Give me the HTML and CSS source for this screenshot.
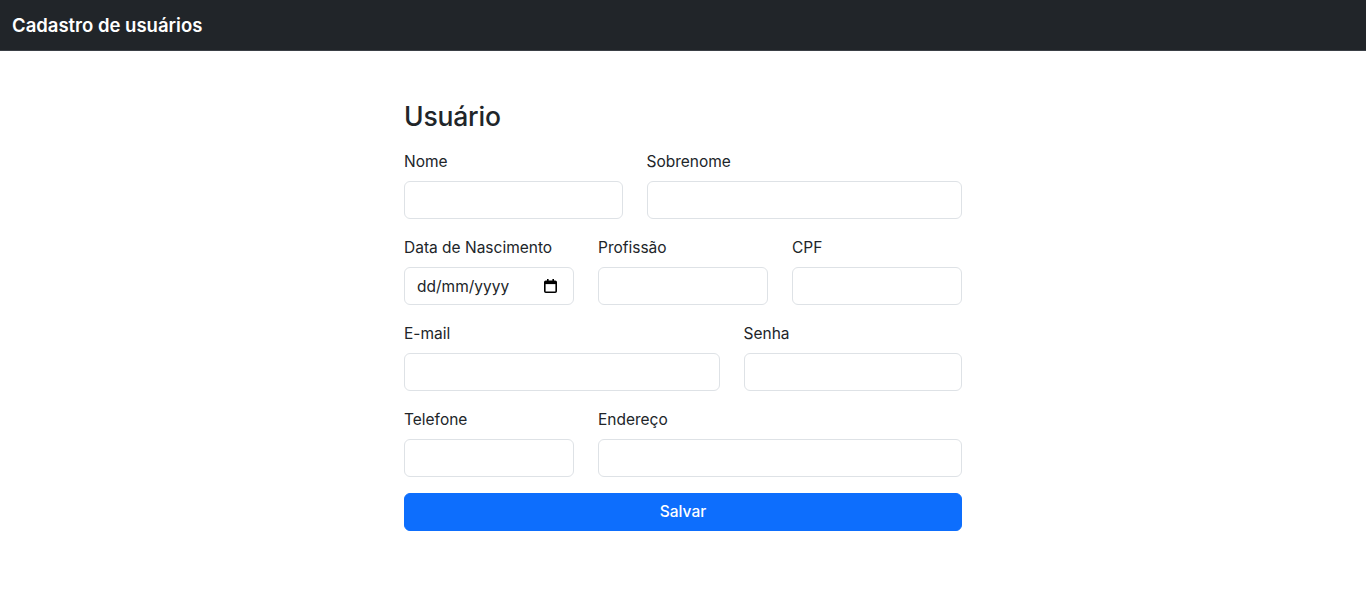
FILE: index.html
```html
<!DOCTYPE html>
<html lang="pt-BR">
<head>
<meta charset="utf-8">
<title>Cadastro de usuários</title>
<link rel="stylesheet" href="styles.css">
</head>
<body>
<nav class="navbar">
  <span class="brand">Cadastro de usuários</span>
</nav>
<main class="page">
  <form class="user-form">
    <h3 class="title">Usuário</h3>
    <div class="row">
      <div class="field col-5">
        <label class="label" for="nome">Nome</label>
        <input class="input" id="nome" type="text">
      </div>
      <div class="field col-7">
        <label class="label" for="sobrenome">Sobrenome</label>
        <input class="input" id="sobrenome" type="text">
      </div>
    </div>
    <div class="row">
      <div class="field col-4">
        <label class="label" for="nasc">Data de Nascimento</label>
        <div class="input date-input" id="nasc">
          <span class="date-text">dd/mm/yyyy</span>
          <svg class="cal-icon" width="13" height="14" viewBox="0 0 13 14" aria-hidden="true">
            <rect x="3" y="0" width="1.6" height="2.5" fill="#000"/>
            <rect x="8.4" y="0" width="1.6" height="2.5" fill="#000"/>
            <rect x="0.8" y="2.3" width="11.4" height="10.9" rx="1" fill="none" stroke="#000" stroke-width="1.6"/>
            <rect x="0.8" y="2.3" width="11.4" height="2.8" fill="#000"/>
          </svg>
        </div>
      </div>
      <div class="field col-4">
        <label class="label" for="prof">Profissão</label>
        <input class="input" id="prof" type="text">
      </div>
      <div class="field col-4">
        <label class="label" for="cpf">CPF</label>
        <input class="input" id="cpf" type="text">
      </div>
    </div>
    <div class="row">
      <div class="field col-7">
        <label class="label" for="email">E-mail</label>
        <input class="input" id="email" type="email">
      </div>
      <div class="field col-5">
        <label class="label" for="senha">Senha</label>
        <input class="input" id="senha" type="password">
      </div>
    </div>
    <div class="row">
      <div class="field col-4">
        <label class="label" for="tel">Telefone</label>
        <input class="input" id="tel" type="text">
      </div>
      <div class="field col-8">
        <label class="label" for="end">Endereço</label>
        <input class="input" id="end" type="text">
      </div>
    </div>
    <button class="btn-primary" type="button">Salvar</button>
  </form>
</main>
</body>
</html>
```

FILE: styles.css
```css
* { box-sizing: border-box; }

html, body {
  margin: 0;
  padding: 0;
  background: #fff;
}

body {
  font-family: Inter, "Noto Sans", "Liberation Sans", Arial, sans-serif;
  font-size: 16px;
  line-height: 24px;
  color: #212529;
}

.navbar {
  height: 51px;
  background: #212529;
  border-bottom: 1px solid #3a3f45;
  display: flex;
  align-items: center;
  padding: 0 12px;
}

.brand {
  color: #fff;
  font-size: 18.5px;
  font-weight: 600;
  letter-spacing: 0;
  line-height: 30px;
}

.page {
  display: flex;
  justify-content: center;
  padding-top: 48px;
}

.user-form {
  width: 558px;
  display: flex;
  flex-direction: column;
}

.title {
  margin: 0 0 16px;
  padding-top: 1px;
  font-size: 26.5px;
  font-weight: 500;
  line-height: 33px;
  letter-spacing: -0.2px;
}

.row {
  display: grid;
  grid-template-columns: repeat(12, 1fr);
  column-gap: 24px;
  margin-bottom: 16px;
}

.col-4 { grid-column: span 4; }
.col-5 { grid-column: span 5; }
.col-7 { grid-column: span 7; }
.col-8 { grid-column: span 8; }

.field {
  display: flex;
  flex-direction: column;
  min-width: 0;
}

.label {
  display: block;
  padding-top: 1px;
  margin-bottom: 7px;
  font-size: 15.5px;
  line-height: 24px;
}

.input {
  display: block;
  width: 100%;
  height: 38px;
  padding: 6px 12px;
  font: inherit;
  color: #212529;
  background: #fff;
  border: 1px solid #dee2e6;
  border-radius: 6px;
  outline: none;
}

.date-input {
  display: flex;
  align-items: center;
  justify-content: space-between;
  padding: 0 16px 0 12px;
}

.date-text {
  font-size: 15.5px;
  color: #212529;
  padding-top: 1px;
}

.cal-icon {
  flex: none;
  margin-top: -1px;
}

.btn-primary {
  display: block;
  width: 100%;
  height: 38px;
  padding-top: 1px;
  background: #0d6efd;
  color: #fff;
  border: 1px solid #0d6efd;
  border-radius: 6px;
  font: inherit;
  font-size: 15.5px;
  font-weight: 500;
  cursor: pointer;
}
```
